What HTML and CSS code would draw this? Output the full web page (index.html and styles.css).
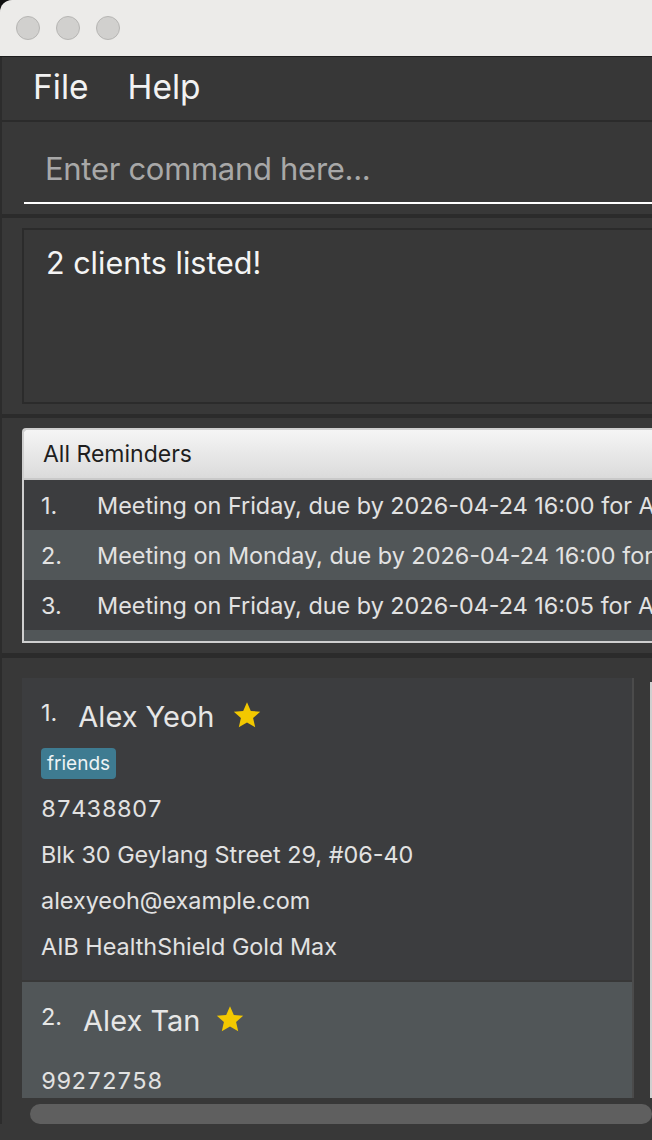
FILE: index.html
```html
<!DOCTYPE html>
<html>
<head>
<meta charset="utf-8">
<link rel="stylesheet" href="styles.css">
</head>
<body>
<div class="window">
  <div class="titlebar">
    <span class="light"></span><span class="light"></span><span class="light"></span>
  </div>
  <div class="main">
    <div class="menubar"><span class="menu">File</span><span class="menu">Help</span></div>
    <div class="command"><div class="field">Enter command here...</div></div>
    <div class="result"><div class="result-box">2 clients listed!</div></div>
    <div class="reminders">
      <div class="rem-box">
        <div class="rem-head">All Reminders</div>
        <div class="rem-row"><span class="rem-num">1.</span><span class="rem-text">Meeting on Friday, due by 2026-04-24 16:00 for A</span></div>
        <div class="rem-row alt"><span class="rem-num">2.</span><span class="rem-text">Meeting on Monday, due by 2026-04-24 16:00 for</span></div>
        <div class="rem-row"><span class="rem-num">3.</span><span class="rem-text">Meeting on Friday, due by 2026-04-24 16:05 for A</span></div>
        <div class="rem-row alt rem-partial"></div>
      </div>
    </div>
    <div class="persons">
      <div class="list">
        <div class="card">
          <div class="card-head">
            <span class="card-num">1.</span>
            <span class="card-name">Alex Yeoh</span>
            <svg class="star" viewBox="0 0 24 24" width="30" height="30"><path d="M12 1.8l3.05 6.9 7.5.7-5.68 4.98 1.7 7.37L12 17.9l-6.57 3.85 1.7-7.37L1.45 9.4l7.5-.7z" fill="#f2c800"/></svg>
          </div>
          <div class="tags"><span class="tag">friends</span></div>
          <div class="line num">87438807</div>
          <div class="line">Blk 30 Geylang Street 29, #06-40</div>
          <div class="line">alexyeoh@example.com</div>
          <div class="line">AIB HealthShield Gold Max</div>
        </div>
        <div class="card selected">
          <div class="card-head">
            <span class="card-num">2.</span>
            <span class="card-name">Alex Tan</span>
            <svg class="star" viewBox="0 0 24 24" width="30" height="30"><path d="M12 1.8l3.05 6.9 7.5.7-5.68 4.98 1.7 7.37L12 17.9l-6.57 3.85 1.7-7.37L1.45 9.4l7.5-.7z" fill="#f2c800"/></svg>
          </div>
          <div class="tags empty"></div>
          <div class="line num">99272758</div>
        </div>
      </div>
      <div class="vline"></div>
    </div>
    <div class="hscroll"><div class="thumb"></div></div>
  </div>
</div>
</body>
</html>
```

FILE: styles.css
```css
html, body {
  margin: 0;
  padding: 0;
  background: #111;
}
body {
  width: 652px;
  height: 1140px;
  overflow: hidden;
  font-family: Inter, "Noto Sans", "Liberation Sans", sans-serif;
}
.window {
  width: 652px;
  height: 1140px;
  border-top-left-radius: 12px;
  overflow: hidden;
  background: #383838;
}
.titlebar {
  box-sizing: border-box;
  height: 57px;
  background: #ecebe9;
  border-bottom: 1px solid #1e1e1e;
  display: flex;
  align-items: center;
  gap: 16px;
  padding-left: 16px;
}
.light {
  width: 22px;
  height: 22px;
  border-radius: 50%;
  background: #d1d0ce;
  border: 1px solid #b7b6b4;
}
.main {
  border-left: 2px solid #2c2c2c;
  display: flex;
  flex-direction: column;
}
.menubar {
  box-sizing: border-box;
  height: 65px;
  padding: 0 0 3px 31px;
  background: #373737;
  border-bottom: 2px solid #2b2b2b;
  display: flex;
  align-items: center;
  gap: 39px;
}
.menu {
  font-size: 33.5px;
  color: #f2f2f2;
}
.command {
  box-sizing: border-box;
  height: 96px;
  padding-left: 22px;
  border-bottom: 4px solid #2b2b2b;
}
.field {
  height: 68px;
  margin-top: 12px;
  border-bottom: 2px solid #ffffff;
  display: flex;
  align-items: center;
  padding-left: 21px;
  font-size: 31px;
  letter-spacing: -0.3px;
  color: #a8a8a8;
  white-space: nowrap;
}
.result {
  padding: 10px 0 10px 20px;
  border-bottom: 4px solid #2b2b2b;
}
.result-box {
  border: 2px solid #2b2b2b;
  border-right: none;
  padding: 13px 0 0 22px;
  height: 159px;
  font-size: 30.5px;
  line-height: 40px;
  color: #f4f4f4;
}
.reminders {
  padding: 10px 0 10px 20px;
  border-bottom: 5px solid #2b2b2b;
}
.rem-box {
  height: 211px;
  border: 2px solid #cfcfcf;
  border-right: none;
  border-top-left-radius: 4px;
  overflow: hidden;
  background: #3c3d3f;
}
.rem-head {
  height: 48px;
  border-bottom: 2px solid #c9c9c9;
  background: linear-gradient(#f5f5f5, #dbdbdb);
  display: flex;
  align-items: center;
  padding-left: 19px;
  font-size: 23px;
  color: #1e1e1e;
}
.rem-row {
  height: 50px;
  display: flex;
  align-items: center;
  padding-left: 17px;
  background: #3c3d3f;
  color: #e2e2e2;
  font-size: 23.4px;
  white-space: nowrap;
  overflow: hidden;
}
.rem-row.alt {
  background: #515658;
}
.rem-partial {
  height: 11px;
}
.rem-num {
  width: 56px;
  flex: none;
}
.persons {
  padding: 20px 0 0 20px;
  display: flex;
  height: 440px;
  box-sizing: border-box;
}
.list {
  width: 610px;
  border-right: 2px solid #4b4b4b;
  overflow: hidden;
  flex: none;
}
.vline {
  margin-left: 16px;
  margin-top: 4px;
  width: 2px;
  background: #cfcfcf;
}
.card {
  background: #3c3d3f;
  height: 302px;
  box-sizing: border-box;
  padding: 20px 0 0 19px;
  margin-bottom: 2px;
  color: #e2e2e2;
}
.card.selected {
  background: #515658;
}
.card-head {
  height: 36px;
  display: flex;
  align-items: flex-start;
  margin-bottom: 14px;
}
.card-num {
  font-size: 23.5px;
  line-height: 30px;
  margin-right: 21px;
  flex: none;
  color: #e6e6e6;
}
.card-name {
  font-size: 29px;
  line-height: 37px;
  color: #e6e6e6;
}
.star {
  margin-left: 17px;
  margin-top: 2px;
}
.selected .star {
  margin-left: 15px;
}
.tags {
  height: 31px;
  margin-bottom: 7px;
  display: flex;
}
.tags.empty {
  height: 0;
  margin-bottom: 6px;
}
.tag {
  background: #3e7b91;
  border-radius: 4px;
  height: 31px;
  padding: 0 6px;
  display: flex;
  align-items: center;
  font-size: 19px;
  color: #eef3f5;
}
.line {
  height: 46px;
  line-height: 46px;
  font-size: 23.4px;
  white-space: nowrap;
}
.line.num {
  font-variant-numeric: tabular-nums;
}
.hscroll {
  padding: 6px 0 0 28px;
}
.thumb {
  height: 20px;
  background: #5f5f5f;
  border-radius: 10px;
}
```
